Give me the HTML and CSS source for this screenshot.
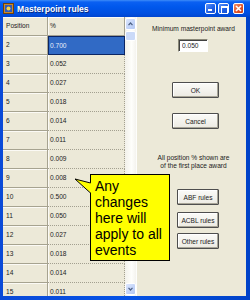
FILE: index.html
```html
<!DOCTYPE html>
<html lang="en">
<head>
    <meta charset="UTF-8">
    <title>Masterpoint rules</title>
    <link rel="stylesheet" href="styles.css">
</head>
<body>
    <div class="window">
        <div class="titlebar">
            <svg class="appicon" width="11" height="11" viewBox="0 0 11 11">
                <rect x="0.5" y="0.5" width="10" height="10" fill="#c98a2a" stroke="#6b3f0c"/>
                <rect x="2" y="2" width="7" height="7" fill="#2f59b8"/>
                <circle cx="5.5" cy="5.5" r="2" fill="#f4d24a"/>
            </svg>
            <span class="title">Masterpoint rules</span>
            <span class="tbtn min"></span>
            <span class="tbtn max"></span>
            <span class="tbtn close">
                <svg width="7" height="7" viewBox="0 0 7 7"><path d="M1 1L6 6M6 1L1 6" stroke="#fff" stroke-width="1.6"/></svg>
            </span>
        </div>

        <div class="body">
            <div class="grid">
                <div class="table">
                    <div class="row head"><div class="pos">Position</div><div class="val">%</div></div>
                    <div class="row"><div class="pos">2</div><div class="val sel">0.700</div></div>
                    <div class="row"><div class="pos">3</div><div class="val">0.052</div></div>
                    <div class="row"><div class="pos">4</div><div class="val">0.027</div></div>
                    <div class="row"><div class="pos">5</div><div class="val">0.018</div></div>
                    <div class="row"><div class="pos">6</div><div class="val">0.014</div></div>
                    <div class="row"><div class="pos">7</div><div class="val">0.011</div></div>
                    <div class="row"><div class="pos">8</div><div class="val">0.009</div></div>
                    <div class="row"><div class="pos">9</div><div class="val">0.008</div></div>
                    <div class="row"><div class="pos">10</div><div class="val">0.500</div></div>
                    <div class="row"><div class="pos">11</div><div class="val">0.050</div></div>
                    <div class="row"><div class="pos">12</div><div class="val">0.027</div></div>
                    <div class="row"><div class="pos">13</div><div class="val">0.018</div></div>
                    <div class="row"><div class="pos">14</div><div class="val">0.014</div></div>
                    <div class="row"><div class="pos">15</div><div class="val">0.011</div></div>
                </div>
                <div class="scroll">
                    <div class="sbtn">
                        <svg width="5" height="4" viewBox="0 0 5 4"><path d="M0.5 3.2L2.5 1L4.5 3.2" fill="none" stroke="#4d6185" stroke-width="1.2"/></svg>
                    </div>
                    <div class="thumb"></div>
                    <div class="track"></div>
                    <div class="sbtn">
                        <svg width="5" height="4" viewBox="0 0 5 4"><path d="M0.5 0.8L2.5 3L4.5 0.8" fill="none" stroke="#4d6185" stroke-width="1.2"/></svg>
                    </div>
                </div>
            </div>

            <div class="panel">
                <div class="label">Minimum masterpoint award</div>
                <input class="award" type="text" value="0.050">
                <button class="btn ok">OK</button>
                <button class="btn cancel">Cancel</button>
                <div class="label info">All position % shown are of the first place award</div>
                <button class="btn rules abf">ABF rules</button>
                <button class="btn rules acbl">ACBL rules</button>
                <button class="btn rules other">Other rules</button>
            </div>
        </div>

        <div class="callout">
            <svg class="pointer" width="18" height="20" viewBox="0 0 18 20">
                <polygon points="1,2 17,6 17,16" fill="#ffff00"/>
                <path d="M1 2L16.5 6M1 2L16.5 16" stroke="#000" stroke-width="1" fill="none"/>
            </svg>
            Any changes here will apply to all events
        </div>
    </div>
</body>
</html>
```

FILE: styles.css
```css
* {
    box-sizing: border-box;
}
body {
    margin: 0;
    overflow: hidden;
}
.window {
    position: relative;
    width: 250px;
    height: 300px;
    display: flex;
    flex-direction: column;
    background: linear-gradient(90deg, #0a4ad8, #0553e6 50%, #0042c8);
    font-family: 'Liberation Sans', Arial, sans-serif;
    overflow: hidden;
}

/* title bar */
.titlebar {
    height: 17px;
    flex: none;
    display: flex;
    align-items: center;
    padding: 0 6px 0 3px;
    background: linear-gradient(#3d8cf8 0, #0a60f2 2px, #0058ec 40%, #004fe0 80%, #0045cf 100%);
}
.appicon {
    flex: none;
}
.title {
    margin-left: 3px;
    color: #fff;
    font-size: 8.6px;
    font-weight: bold;
    text-shadow: 1px 1px #0a2a80;
}
.tbtn {
    width: 11px;
    height: 11px;
    border: 1px solid #fff;
    border-radius: 2px;
    background: linear-gradient(135deg, #5c93f8, #1d5fe6 60%, #1a4fd0);
    position: relative;
    display: flex;
    align-items: center;
    justify-content: center;
}
.min {
    margin-left: auto;
}
.min::after {
    content: '';
    position: absolute;
    left: 2px;
    bottom: 2px;
    width: 4px;
    height: 2px;
    background: #fff;
}
.max {
    margin-left: 2px;
}
.max::after {
    content: '';
    position: absolute;
    left: 2px;
    top: 2px;
    width: 5px;
    height: 5px;
    border: 1px solid #fff;
    border-top-width: 2px;
}
.close {
    margin-left: 4px;
    background: linear-gradient(135deg, #f0906a, #e0552c 55%, #c8421c);
}

/* window body */
.body {
    flex: 1;
    min-height: 0;
    display: flex;
    margin: 0 4px 4px 3px;
    background: #ece9d8;
}

/* grid */
.grid {
    width: 134px;
    flex: none;
    display: flex;
    border-right: 1px solid #fdfdfb;
}
.table {
    width: 122px;
    overflow: hidden;
    font-size: 6.6px;
    color: #222;
}
.row {
    display: flex;
    height: 19px;
    line-height: 18px;
}
.pos {
    width: 45px;
    padding-left: 3px;
    border-right: 1px solid #a6a390;
    border-bottom: 1px solid #a6a390;
    box-shadow: inset 0 1px #fbfaf5;
}
.val {
    flex: 1;
    padding-left: 2px;
    border-right: 1px dotted #a3a090;
    border-bottom: 1px dotted #a3a090;
    box-shadow: inset 1px 0 #fbfaf5;
}
.head .val {
    border-right-style: solid;
    border-bottom-style: solid;
    box-shadow: inset 1px 1px #fbfaf5;
}
.val.sel {
    background: #316ac5;
    border: 1px solid #0b2563;
    padding-left: 1px;
    line-height: 17px;
    color: #e8eefa;
    box-shadow: none;
}

/* scrollbar */
.scroll {
    width: 11px;
    display: flex;
    flex-direction: column;
    padding: 1px 0;
    background: linear-gradient(90deg, #f2f1ea, #fefefb 60%, #f4f3ee);
}
.sbtn {
    height: 12px;
    border: 1px solid #fff;
    border-radius: 2px;
    background: linear-gradient(135deg, #dde7fd, #c2d3f8 60%, #b2c6f2);
    display: flex;
    align-items: center;
    justify-content: center;
}
.thumb {
    height: 10px;
    margin-top: 1px;
    border: 1px solid #fff;
    border-radius: 2px;
    background: #cbdaf8;
}
.track {
    flex: 1;
}

/* right panel */
.panel {
    flex: 1;
    display: flex;
    flex-direction: column;
    align-items: flex-start;
    padding-top: 8px;
    font-size: 6.6px;
    color: #222;
}
.label {
    width: 83px;
    margin-left: 15px;
    text-align: center;
    line-height: 8px;
}
.award {
    width: 30px;
    height: 13px;
    margin: 6px 0 0 41px;
    padding: 0 0 0 3px;
    border: 1px solid;
    border-color: #8a8878 #fff #fff #8a8878;
    box-shadow: inset 1px 1px #404040;
    background: #fff;
    font: inherit;
    color: #222;
}
.btn {
    height: 16px;
    padding: 0;
    border: 1px solid #4e4e4e;
    border-radius: 1px;
    background: linear-gradient(#fbfbf8, #eceae2);
    box-shadow: inset -1px -1px #a8a597, inset 1px 1px #fff;
    font: inherit;
    color: #222;
}
.ok {
    width: 47px;
    margin: 30px 0 0 35px;
}
.cancel {
    width: 47px;
    margin: 15px 0 0 35px;
}
.info {
    margin-top: 25px;
    padding: 0 3px;
}
.rules {
    width: 42px;
    margin-left: 40px;
}
.abf {
    margin-top: 19px;
}
.acbl {
    margin-top: 7px;
}
.other {
    margin-top: 5px;
}

/* note callout */
.callout {
    position: absolute;
    left: 90px;
    top: 174px;
    width: 80px;
    height: 87px;
    padding: 3px 0 0 4px;
    border: 1px solid #000;
    background: #ffff00;
    font-size: 14px;
    line-height: 16px;
    color: #000;
}
.pointer {
    position: absolute;
    left: -17px;
    top: 2px;
}
```
